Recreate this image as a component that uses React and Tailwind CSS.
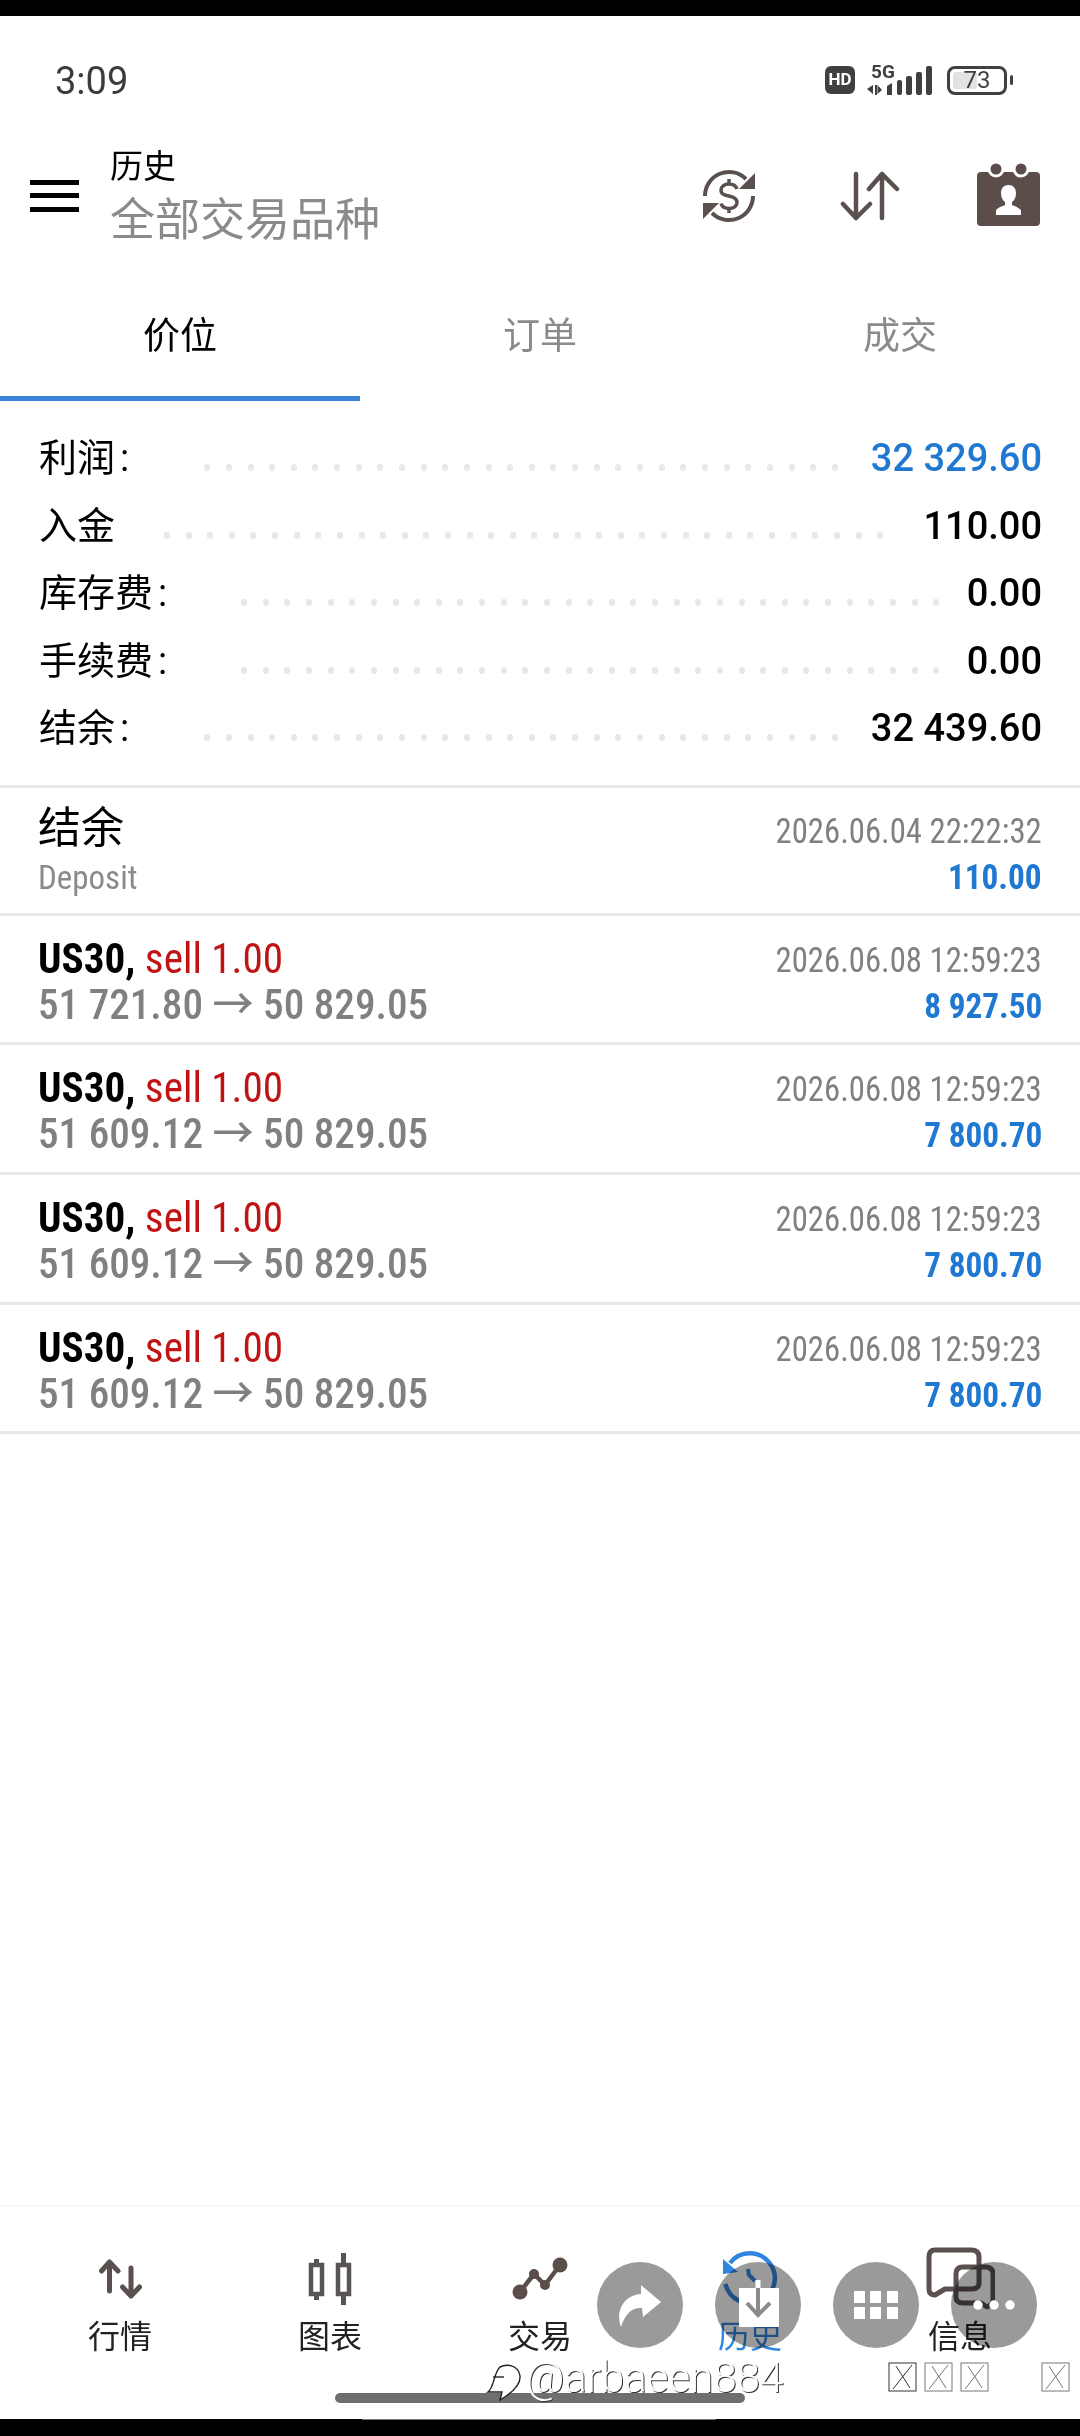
const trades = [
  { open: "51 721.80", close: "50 829.05", profit: "8 927.50" },
  { open: "51 609.12", close: "50 829.05", profit: "7 800.70" },
  { open: "51 609.12", close: "50 829.05", profit: "7 800.70" },
  { open: "51 609.12", close: "50 829.05", profit: "7 800.70" },
];

const summary = [
  { label: "利润", colon: true, value: "32 329.60", dots: 30, ml: "ml-[75px]", mr: "mr-[33px]", color: "text-[#1f78d1]" },
  { label: "入金", colon: false, value: "110.00", dots: 34, ml: "ml-[49px]", mr: "mr-[40px]", color: "text-black" },
  { label: "库存费", colon: true, value: "0.00", dots: 33, ml: "ml-[74px]", mr: "mr-[27px]", color: "text-black" },
  { label: "手续费", colon: true, value: "0.00", dots: 33, ml: "ml-[74px]", mr: "mr-[27px]", color: "text-black" },
  { label: "结余", colon: true, value: "32 439.60", dots: 30, ml: "ml-[75px]", mr: "mr-[33px]", color: "text-black" },
];

function Dots({ count }) {
  return (
    <div className="flex flex-1 items-center justify-between pt-[18px]">
      {Array.from({ length: count }).map((_, i) => (
        <span key={i} className="h-[7px] w-[6px] rounded-full bg-[#e8e8e8]" />
      ))}
    </div>
  );
}

function Tofu({ dark }) {
  return (
    <svg width="29" height="30" viewBox="0 0 29 30" fill="none" stroke={dark ? "#333" : "#777"} strokeWidth="1">
      <rect x="1" y="1" width="27" height="28" />
      <path d="M5 27 L24 3 M8 4 L22 26" />
    </svg>
  );
}

function NavItem({ label, active, children }) {
  return (
    <div className="flex w-[210px] flex-col items-center">
      <div className="flex h-[60px] w-full items-center justify-center">{children}</div>
      <span className={`mt-[6px] text-[32px] leading-[44px] ${active ? "text-[#2f86e0]" : "text-[#222]"}`}>{label}</span>
    </div>
  );
}

export default function App() {
  return (
    <div className="flex min-h-[2436px] flex-col bg-white font-['Roboto','Noto_Sans_CJK_SC',sans-serif]">
      <div className="h-[16px] bg-black" />

      {/* status bar */}
      <div className="flex h-[128px] items-center justify-between pl-[55px] pr-[67px]">
        <span className="pt-[3px] text-[38px] text-[#3c3c3c]">3:09</span>
        <div className="flex items-center">
          <div className="flex h-[28px] w-[30px] items-center justify-center rounded-[6px] bg-[#404040] text-[17px] font-bold text-white">HD</div>
          <div className="relative ml-[12px] h-[30px] w-[66px]">
            <span className="absolute left-[4px] top-[-2px] text-[19px] font-bold leading-[18px] text-[#404040]">5G</span>
            <svg className="absolute left-0 top-0" width="66" height="30" viewBox="0 0 66 30" fill="#404040">
              <path d="M0 24 L6 20 V29 Z M8 20 H10 V30 H8 Z M10.5 20 L15 25 L10.5 29 Z" />
              <path d="M20 30 V21 L25 18 V30 Z" />
              <rect x="30" y="15" width="5" height="15" rx="2" />
              <rect x="39" y="11" width="6" height="19" rx="2" />
              <rect x="49" y="7" width="6" height="23" rx="2" />
              <rect x="59" y="1" width="6" height="29" rx="2" />
            </svg>
          </div>
          <div className="relative ml-[14px] flex h-[29px] w-[60px] items-center justify-center rounded-[8px] border-[3px] border-[#404040] text-[24px] leading-none text-[#404040]">
            <div className="absolute bottom-[3px] left-[3px] top-[3px] w-[24px] rounded-[3px] bg-[#e2e2e2]" />
            <span className="relative">73</span>
          </div>
          <div className="ml-[3px] h-[10px] w-[3px] rounded-full bg-[#404040]" />
        </div>
      </div>

      {/* toolbar */}
      <div className="flex h-[106px] items-start">
        <svg className="ml-[30px] mt-[36px]" width="49" height="32" viewBox="0 0 49 32" fill="#000">
          <rect y="0" width="49" height="5" />
          <rect y="13" width="49" height="5" />
          <rect y="27" width="49" height="5" />
        </svg>
        <div className="ml-[31px] flex flex-col pt-[3px]">
          <span className="text-[33px] leading-[40px] text-black">历史</span>
          <span className="mt-[7px] text-[45px] leading-[54px] text-[#8a8a8a]">全部交易品种</span>
        </div>
        <svg className="ml-[322px] mt-[25px]" width="54" height="54" viewBox="0 0 54 54" fill="none" stroke="#5a514e" strokeWidth="4">
          <path d="M3 27 A24 24 0 0 1 44 10" />
          <path d="M51 27 A24 24 0 0 1 10 44" />
          <path d="M53 4 V20 H37 Z M1 50 V34 H17 Z" fill="#5a514e" stroke="none" />
          <path strokeWidth="3.5" d="M35 20 c-1-3-4-5-8-5 c-5 0-8 3-8 6 c0 4 3 5 8 6 c5 1 8 3 8 6.5 c0 3.5-3.5 6-8 6 c-4 0-7-2-8-5 M27 10 V15 M27 39 V44" />
        </svg>
        <svg className="ml-[84px] mt-[27px]" width="60" height="50" viewBox="0 0 60 50" fill="none" stroke="#5a514e" strokeWidth="4.5" strokeLinecap="round" strokeLinejoin="round">
          <path d="M16 3 V47 M3 33 L16 47 L30 33" />
          <path d="M42 47 V3 M29 18 L42 3 L57 18" />
        </svg>
        <svg className="ml-[77px] mt-[19px]" width="63" height="63" viewBox="0 0 63 63">
          <rect y="9" width="63" height="54" rx="4" fill="#5a4d4a" />
          <circle cx="19" cy="6" r="8.5" fill="#fff" />
          <circle cx="44" cy="6" r="8.5" fill="#fff" />
          <circle cx="19" cy="6" r="5.5" fill="#5a4d4a" />
          <circle cx="44" cy="6" r="5.5" fill="#5a4d4a" />
          <path fill="#fff" d="M19 52 v-4 c0-3 7-5 9-6 v-3 c-3-2-4-6-4-9 c0-5 3-8 7.5-8 s7.5 3 7.5 8 c0 3-1 7-4 9 v3 c2 1 9 3 9 6 v4 z" />
        </svg>
      </div>

      {/* tabs */}
      <div className="flex h-[151px]">
        <div className="flex w-[360px] items-end justify-center border-b-[5px] border-[#3a82d8] pb-[34px] text-[37px] leading-[50px] text-black">价位</div>
        <div className="flex w-[360px] items-end justify-center pb-[39px] text-[37px] leading-[50px] text-[#8a8a8a]">订单</div>
        <div className="flex w-[360px] items-end justify-center pb-[39px] text-[37px] leading-[50px] text-[#8a8a8a]">成交</div>
      </div>

      {/* summary */}
      <div className="border-b-[3px] border-[#e8e8e8] pb-[22px] pl-[39px] pr-[38px] pt-[24px]">
        {summary.map((row) => (
          <div key={row.label} className="flex h-[67.5px] items-center">
            <span className="whitespace-nowrap text-[38px] text-black">
              {row.label}
              {row.colon && <span className="ml-[5px]">:</span>}
            </span>
            <div className={`flex flex-1 ${row.ml} ${row.mr}`}>
              <Dots count={row.dots} />
            </div>
            <span className={`whitespace-nowrap text-[38px] font-medium ${row.color}`}>{row.value}</span>
          </div>
        ))}
      </div>

      {/* deposit */}
      <div className="flex h-[128px] justify-between border-b-[3px] border-[#e8e8e8] pl-[38px] pr-[38px] pt-[15px]">
        <div className="flex flex-col items-start">
          <span className="text-[43px] leading-[50px] text-black">结余</span>
          <span className="mt-[1px] origin-left scale-x-[0.97] text-[34px] leading-[46px] text-[#8a8a8a] [font-stretch:75%]">Deposit</span>
        </div>
        <div className="flex flex-col items-end pt-[6px]">
          <span className="origin-right scale-x-[0.935] text-[35px] leading-[46px] text-[#808080] [font-stretch:75%]">2026.06.04 22:22:32</span>
          <span className="origin-right scale-x-[0.95] text-[35px] font-bold leading-[46px] text-[#1f78d1] [font-stretch:75%]">110.00</span>
        </div>
      </div>

      {/* trades */}
      {trades.map((t, i) => (
        <div key={i} className="flex h-[129.7px] justify-between border-b-[3px] border-[#e8e8e8] pl-[38px] pr-[38px] pt-[20px]">
          <div className="flex origin-left scale-x-[0.98] flex-col whitespace-nowrap text-[42px] leading-[46px] [font-stretch:75%]">
            <span>
              <span className="font-bold text-black">US30, </span>
              <span className="text-[#c01414]">sell 1.00</span>
            </span>
            <span className="font-medium text-[#808080]">
              {t.open} → {t.close}
            </span>
          </div>
          <div className="flex flex-col items-end pt-[2px] text-[35px] leading-[46px]">
            <span className="origin-right scale-x-[0.935] text-[#808080] [font-stretch:75%]">2026.06.08 12:59:23</span>
            <span className="origin-right scale-x-[0.95] font-bold text-[#1f78d1] [font-stretch:75%]">{t.profit}</span>
          </div>
        </div>
      ))}

      <div className="flex-1" />

      {/* bottom nav */}
      <div className="relative h-[214px] border-t-[2px] border-[#f8f8f8] pt-[42px]">
        <div className="flex px-[15px]">
          <NavItem label="行情">
            <svg width="43" height="40" viewBox="0 0 43 40" fill="none" stroke="#5a514e" strokeWidth="5" strokeLinecap="round" strokeLinejoin="round">
              <path d="M10.5 32 V3 M2.5 12 L10.5 3 L19 12" />
              <path d="M32 9 V37 M23.5 28 L32 37 L40.5 28" />
            </svg>
          </NavItem>
          <NavItem label="图表">
            <svg width="50" height="58" viewBox="0 0 50 58" fill="none" stroke="#5a5555" strokeWidth="4.5">
              <rect x="6" y="15" width="11" height="29" />
              <rect x="33" y="15" width="11" height="29" />
              <path d="M11.5 9 V15 M11.5 44 V50 M38.5 3 V15 M38.5 44 V55" strokeWidth="5" />
            </svg>
          </NavItem>
          <NavItem label="交易">
            <svg width="60" height="50" viewBox="0 0 60 50" fill="none" stroke="#5a4d4a" strokeWidth="4.5" strokeLinejoin="round">
              <path d="M10 38 L24 20 L35 31 L50 11" />
              <circle cx="10" cy="38" r="7.5" fill="#5a4d4a" stroke="none" />
              <circle cx="24" cy="20" r="5" fill="#5a4d4a" stroke="none" />
              <circle cx="35" cy="31" r="5" fill="#5a4d4a" stroke="none" />
              <circle cx="50" cy="11" r="7.5" fill="#5a4d4a" stroke="none" />
            </svg>
          </NavItem>
          <NavItem label="历史" active>
            <svg width="60" height="58" viewBox="0 0 60 58" fill="none" stroke="#2f86e0" strokeWidth="4.5">
              <path d="M10 13 A25 25 0 1 1 5.5 34" />
              <path d="M3 9 L3 24 L18 22 Z" fill="#2f86e0" stroke="none" />
              <path d="M28 19 L29 25 L35 31" strokeWidth="4" />
            </svg>
          </NavItem>
          <NavItem label="信息">
            <svg width="70" height="64" viewBox="0 0 70 64" fill="none" stroke="#5a5050" strokeWidth="5" strokeLinejoin="round">
              <path d="M10 3 H46 Q54 3 54 10 V36 Q54 42 46 42 H20 L10 48 Q4 48 4 42 V10 Q4 3 10 3 Z" />
              <path d="M38 20 H60 Q68 20 68 27 V56 L62 60 L56 56 H38 Q31 56 31 50 V27 Q31 20 38 20 Z" />
            </svg>
          </NavItem>
        </div>

        {/* share overlay circles */}
        <div className="absolute left-[597px] top-[55px] h-[86px] w-[86px] rounded-full bg-[#9a9a9a] mix-blend-multiply" />
        <div className="absolute left-[715px] top-[55px] h-[86px] w-[86px] rounded-full bg-[#9a9a9a] mix-blend-multiply" />
        <div className="absolute left-[833px] top-[55px] h-[86px] w-[86px] rounded-full bg-[#9a9a9a] mix-blend-multiply" />
        <div className="absolute left-[951px] top-[55px] h-[86px] w-[86px] rounded-full bg-[#9a9a9a] mix-blend-multiply" />

        <svg className="absolute left-[618px] top-[77px]" width="44" height="44" viewBox="0 0 44 44" fill="#fff">
          <path d="M23 1 L43 18 L25 33 L24 24 C14 23 7 30 3 43 C-3 27 6 11 23 10 Z" />
        </svg>
        <svg className="absolute left-[739px] top-[72px]" width="40" height="50" viewBox="0 0 40 50" fill="none">
          <rect y="9" width="40" height="39" rx="1" fill="#fff" />
          <path d="M19 1 V9" stroke="#fff" strokeWidth="5" />
          <path d="M19 9 V34 M8 24 L19 36 L31 24" stroke="#8a8a8a" strokeWidth="4" />
        </svg>
        <svg className="absolute left-[854px] top-[84px]" width="44" height="28" viewBox="0 0 44 28" fill="#fff">
          <rect width="11" height="12" /><rect x="16" width="11" height="12" /><rect x="33" width="11" height="12" />
          <rect y="16" width="11" height="12" /><rect x="16" y="16" width="11" height="12" /><rect x="33" y="16" width="11" height="12" />
        </svg>
        <svg className="absolute left-[973px] top-[93px]" width="42" height="10" viewBox="0 0 42 10" fill="#fff">
          <circle cx="5" cy="5" r="4.7" /><circle cx="21" cy="5" r="4.7" /><circle cx="37" cy="5" r="4.7" />
        </svg>

        {/* watermark */}
        <div className="absolute bottom-[16px] left-[335px] h-[10px] w-[410px] rounded-full bg-[#6f6f6f]" />
        <svg className="absolute left-[480px] top-[143px]" width="44" height="54" viewBox="0 0 44 54" fill="#fff" stroke="#222" strokeWidth="1.4">
          <path d="M8 42 C14 38 14 22 20 17 C26 14 38 14 40 26 C41 36 30 44 20 50 L22 42 Z" />
          <path d="M13 27 H24" />
        </svg>
        <span className="absolute left-[526px] top-[144px] text-[42px] font-light leading-[54px] text-white [text-shadow:1px_1px_0_#333]">@arbaeen884</span>
        <div className="absolute left-[888px] top-[155px] flex gap-[7px]">
          <Tofu dark />
          <Tofu />
          <Tofu />
          <div className="ml-[45px]">
            <Tofu />
          </div>
        </div>
      </div>

      <div className="h-[17px] bg-black">
        <div className="ml-[362px] h-[1px] w-[354px] bg-[#777]" />
      </div>
    </div>
  );
}
